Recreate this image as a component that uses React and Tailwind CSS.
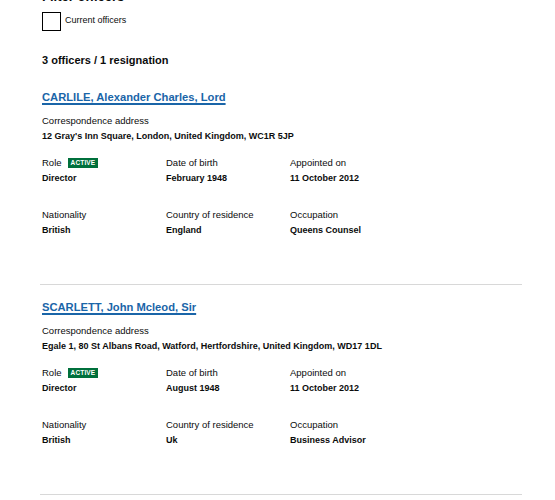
const officers = [
  {
    name: "CARLILE, Alexander Charles, Lord",
    address: "12 Gray's Inn Square, London, United Kingdom, WC1R 5JP",
    role: "Director",
    dob: "February 1948",
    appointed: "11 October 2012",
    nationality: "British",
    residence: "England",
    occupation: "Queens Counsel",
  },
  {
    name: "SCARLETT, John Mcleod, Sir",
    address: "Egale 1, 80 St Albans Road, Watford, Hertfordshire, United Kingdom, WD17 1DL",
    role: "Director",
    dob: "August 1948",
    appointed: "11 October 2012",
    nationality: "British",
    residence: "Uk",
    occupation: "Business Advisor",
  },
];

function Field({ label, value, badge }) {
  return (
    <div className="w-[124px]">
      <div className="flex items-center gap-[6px] h-[14px] text-[9.5px] leading-[14px]">
        <span>{label}</span>
        {badge && (
          <span className="bg-[#00703c] text-white font-bold text-[6.5px] leading-none px-[3px] py-[2px] tracking-wide">
            ACTIVE
          </span>
        )}
      </div>
      <div className="h-[14px] mt-[1px] text-[9px] leading-[14px] font-bold">
        {value}
      </div>
    </div>
  );
}

function Officer({ o, first }) {
  return (
    <div
      className={
        "border-b border-[#d8d8d8] pb-[47px] -ml-[2px] pl-[2px] " +
        (first ? "mt-[21px]" : "pt-[14px]")
      }
    >
      <a
        href="#"
        className="block w-fit text-[11.2px] font-bold text-[#1a65a8] underline underline-offset-[2px] decoration-[1.5px] leading-[16px]"
      >
        {o.name}
      </a>
      <div className="mt-[9px] text-[9.5px] leading-[14px]">
        Correspondence address
      </div>
      <div className="mt-[1px] text-[9px] font-bold leading-[14px]">
        {o.address}
      </div>
      <div className="flex mt-[13px]">
        <Field label="Role" value={o.role} badge />
        <Field label="Date of birth" value={o.dob} />
        <Field label="Appointed on" value={o.appointed} />
      </div>
      <div className="flex mt-[23px]">
        <Field label="Nationality" value={o.nationality} />
        <Field label="Country of residence" value={o.residence} />
        <Field label="Occupation" value={o.occupation} />
      </div>
    </div>
  );
}

export default function App() {
  return (
    <div className="bg-white w-[555px] h-[500px] overflow-hidden font-['Liberation_Sans',Arial,sans-serif] text-[#0b0c0c]">
      <div className="pl-[42px] w-[522px]">
        <h2 className="text-[13px] font-bold leading-[16px] -mt-[11px]">
          Filter officers
        </h2>
        <label className="flex items-start gap-[4px] mt-[7px]">
          <span className="w-[19px] h-[19px] border border-black bg-white" />
          <span className="text-[9px] leading-[14px] mt-[1px]">Current officers</span>
        </label>
        <h3 className="text-[11px] font-bold leading-[16px] mt-[21px]">
          3 officers / 1 resignation
        </h3>
        {officers.map((o, i) => (
          <Officer key={o.name} o={o} first={i === 0} />
        ))}
      </div>
    </div>
  );
}
